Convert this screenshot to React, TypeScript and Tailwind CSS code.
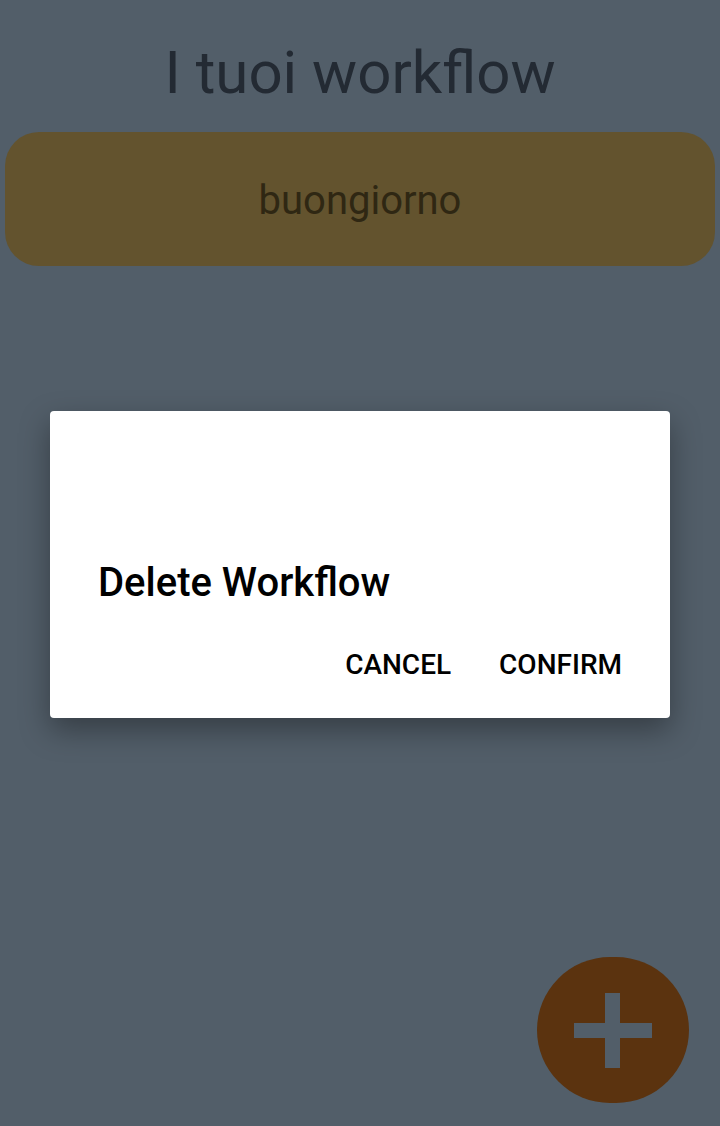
export default function App() {
  return (
    <div className="relative w-[720px] h-[1126px] overflow-hidden bg-[#525e69] font-['Roboto',sans-serif]">
      <div className="flex flex-col items-center">
        <h1 className="mt-[36px] text-[60px] leading-[74px] text-[#232a33]">I tuoi workflow</h1>
        <div className="mt-[22px] w-[710px] h-[134px] rounded-[34px] bg-[#63532e] flex items-center justify-center">
          <span className="mt-[4px] text-[40px] text-[#2f2713]">buongiorno</span>
        </div>
      </div>

      {/* dialog */}
      <div className="absolute left-[50px] top-[411px] w-[620px] h-[307px] bg-white rounded-[4px] shadow-[0_12px_30px_rgba(0,0,0,0.35)] flex flex-col">
        <h2 className="mt-[148px] ml-[48px] text-[40px] leading-[48px] font-medium text-black">Delete Workflow</h2>
        <div className="mt-[41px] mr-[48px] flex justify-end gap-[48px] text-[28px] leading-[34px] font-medium text-black">
          <span>CANCEL</span>
          <span>CONFIRM</span>
        </div>
      </div>

      {/* fab */}
      <div className="absolute left-[537px] top-[957px] w-[152px] h-[146px] rounded-full bg-[#5b330f] flex items-center justify-center">
        <svg width="78" height="75" viewBox="0 0 78 75">
          <rect x="0" y="30" width="78" height="15" fill="#525e69" />
          <rect x="31" y="0" width="15" height="75" fill="#525e69" />
        </svg>
      </div>
    </div>
  )
}
